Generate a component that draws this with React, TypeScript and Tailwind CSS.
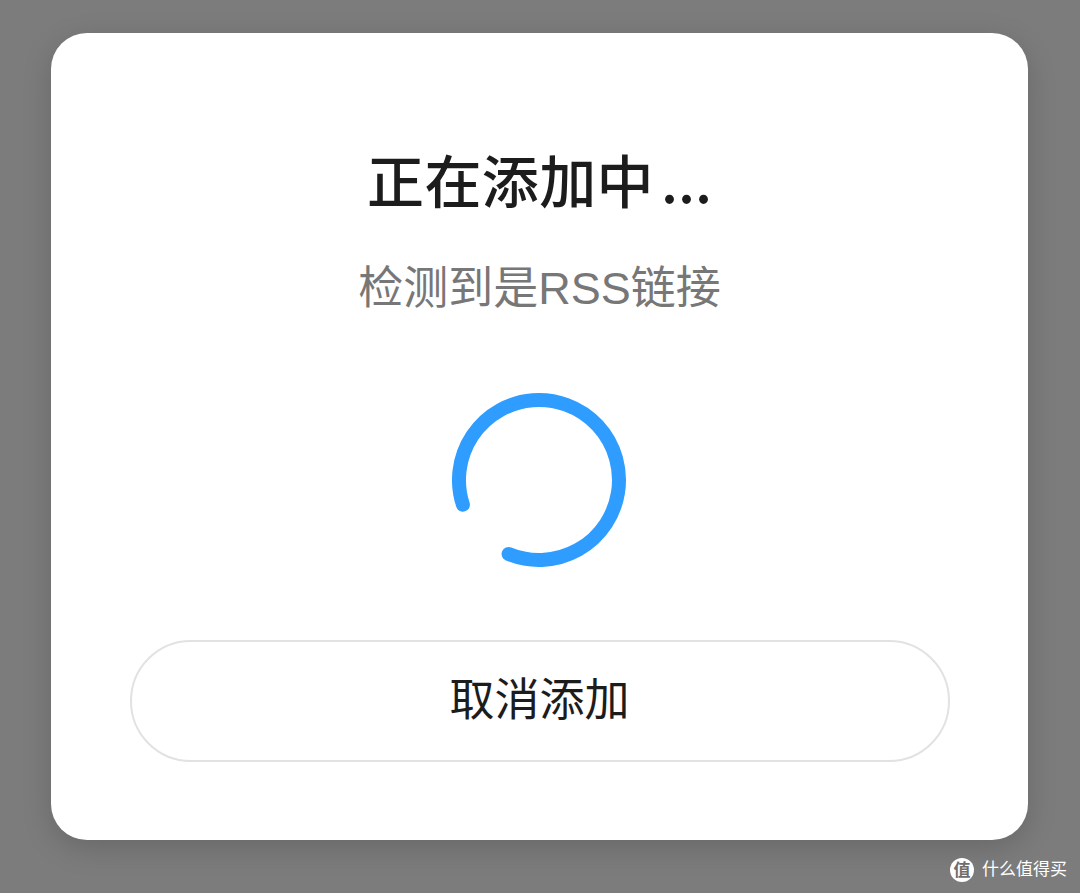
export default function App() {
  return (
    <div className="relative h-[893px] w-[1080px] overflow-hidden bg-[#7c7c7c] pl-[51px] pt-[33px] font-['Liberation_Sans','Noto_Sans_CJK_SC',sans-serif]">
      <div className="flex h-[807px] w-[977px] flex-col items-center rounded-[36px] bg-white shadow-[0_8px_30px_rgba(0,0,0,0.16)]">
        <div className="mt-[112px] h-[66px] text-[57px] font-medium leading-[66px] tracking-[0.4px] text-[#1c1c1c] font-['Noto_Sans_CJK_SC',sans-serif]">
          正在添加中<span className="ml-[7px] tracking-[0px]">...</span>
        </div>
        <div className="mt-[53px] h-[50px] text-[45px] leading-[50px] text-[#777777]">检测到是RSS链接</div>
        <svg className="mt-[78px] block" width="176" height="176" viewBox="1 0 176 176" fill="none">
          <path
            d="M 11.9 112.7 A 80 80 0 1 1 57.6 162"
            stroke="#2e9dff"
            strokeWidth="14"
            strokeLinecap="round"
          />
        </svg>
        <button className="mt-[72px] flex h-[122px] w-[820px] items-center justify-center rounded-full border-[2px] border-[#e2e2e2] bg-white text-[45px] text-[#1c1c1c]">
          取消添加
        </button>
      </div>
      <div className="absolute left-[950px] top-[858px] flex items-center gap-[8px]">
        <div className="flex h-[24px] w-[24px] items-center justify-center rounded-full bg-white text-[17px] font-bold leading-none text-[#6e6e6e]">
          值
        </div>
        <span className="text-[17px] leading-[24px] text-white">什么值得买</span>
      </div>
    </div>
  );
}
